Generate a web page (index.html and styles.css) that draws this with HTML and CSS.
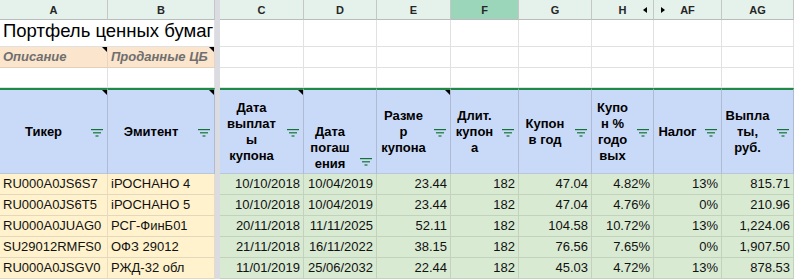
FILE: index.html
```html
<!DOCTYPE html>
<html lang="ru">
<head>
<meta charset="utf-8">
<title>Портфель ценных бумаг</title>
<link rel="stylesheet" href="styles.css">
</head>
<body>
<div class="sheet">
  <div class="freeze"></div>

  <!-- column letters -->
  <div class="ch">A</div>
  <div class="ch">B</div>
  <div class="ch">C</div>
  <div class="ch">D</div>
  <div class="ch">E</div>
  <div class="ch sel">F</div>
  <div class="ch">G</div>
  <div class="ch">H<span class="hid hid-l"></span></div>
  <div class="ch">AF<span class="hid hid-r"></span></div>
  <div class="ch">AG</div>

  <!-- row 1 -->
  <div class="c title">Портфель ценных бумаг</div>
  <div class="c blank"></div>
  <div class="c blank"></div>
  <div class="c blank"></div>
  <div class="c blank"></div>
  <div class="c blank"></div>
  <div class="c blank"></div>
  <div class="c blank"></div>
  <div class="c blank"></div>
  <div class="c blank"></div>

  <!-- row 2 -->
  <div class="c desc">Описание<span class="note"></span></div>
  <div class="c desc">Проданные ЦБ<span class="note"></span></div>
  <div class="c blank"></div>
  <div class="c blank"></div>
  <div class="c blank"></div>
  <div class="c blank"></div>
  <div class="c blank"></div>
  <div class="c blank"></div>
  <div class="c blank"></div>
  <div class="c blank"></div>

  <!-- row 3 -->
  <div class="c blank"></div>
  <div class="c blank"></div>
  <div class="c blank"></div>
  <div class="c blank"></div>
  <div class="c blank"></div>
  <div class="c blank"></div>
  <div class="c blank"></div>
  <div class="c blank"></div>
  <div class="c blank"></div>
  <div class="c blank"></div>

  <!-- header row -->
  <div class="c hd"><div class="hd-txt">Тикер</div><svg class="flt" viewBox="0 0 12 8"><rect x="0" y="0" width="12" height="1.2"/><rect x="2" y="3.2" width="8" height="1.2"/><rect x="4.5" y="6.4" width="3" height="1.2"/></svg><span class="note"></span></div>
  <div class="c hd"><div class="hd-txt">Эмитент</div><svg class="flt" viewBox="0 0 12 8"><rect x="0" y="0" width="12" height="1.2"/><rect x="2" y="3.2" width="8" height="1.2"/><rect x="4.5" y="6.4" width="3" height="1.2"/></svg><span class="note"></span></div>
  <div class="c hd"><div class="hd-txt">Дата<br>выплат<br>ы<br>купона</div><svg class="flt" viewBox="0 0 12 8"><rect x="0" y="0" width="12" height="1.2"/><rect x="2" y="3.2" width="8" height="1.2"/><rect x="4.5" y="6.4" width="3" height="1.2"/></svg><span class="note"></span></div>
  <div class="c hd bot"><div class="hd-txt">Дата<br>погаш<br>ения</div><svg class="flt" viewBox="0 0 12 8"><rect x="0" y="0" width="12" height="1.2"/><rect x="2" y="3.2" width="8" height="1.2"/><rect x="4.5" y="6.4" width="3" height="1.2"/></svg></div>
  <div class="c hd"><div class="hd-txt">Разме<br>р<br>купона</div><svg class="flt" viewBox="0 0 12 8"><rect x="0" y="0" width="12" height="1.2"/><rect x="2" y="3.2" width="8" height="1.2"/><rect x="4.5" y="6.4" width="3" height="1.2"/></svg><span class="note"></span></div>
  <div class="c hd"><div class="hd-txt">Длит.<br>купон<br>а</div><svg class="flt" viewBox="0 0 12 8"><rect x="0" y="0" width="12" height="1.2"/><rect x="2" y="3.2" width="8" height="1.2"/><rect x="4.5" y="6.4" width="3" height="1.2"/></svg></div>
  <div class="c hd"><div class="hd-txt">Купон<br>в год</div><svg class="flt" viewBox="0 0 12 8"><rect x="0" y="0" width="12" height="1.2"/><rect x="2" y="3.2" width="8" height="1.2"/><rect x="4.5" y="6.4" width="3" height="1.2"/></svg></div>
  <div class="c hd"><div class="hd-txt">Купо<br>н %<br>годо<br>вых</div><svg class="flt" viewBox="0 0 12 8"><rect x="0" y="0" width="12" height="1.2"/><rect x="2" y="3.2" width="8" height="1.2"/><rect x="4.5" y="6.4" width="3" height="1.2"/></svg></div>
  <div class="c hd"><div class="hd-txt">Налог</div><svg class="flt" viewBox="0 0 12 8"><rect x="0" y="0" width="12" height="1.2"/><rect x="2" y="3.2" width="8" height="1.2"/><rect x="4.5" y="6.4" width="3" height="1.2"/></svg></div>
  <div class="c hd"><div class="hd-txt">Выпла<br>ты,<br>руб.</div><svg class="flt" viewBox="0 0 12 8"><rect x="0" y="0" width="12" height="1.2"/><rect x="2" y="3.2" width="8" height="1.2"/><rect x="4.5" y="6.4" width="3" height="1.2"/></svg></div>

  <!-- data rows -->
  <div class="c dt y">RU000A0JS6S7</div>
  <div class="c dt y">iРОСНАНО 4</div>
  <div class="c dt g r">10/10/2018</div>
  <div class="c dt g r">10/04/2019</div>
  <div class="c dt g r">23.44</div>
  <div class="c dt g r">182</div>
  <div class="c dt g r">47.04</div>
  <div class="c dt g r">4.82%</div>
  <div class="c dt g r">13%</div>
  <div class="c dt g r">815.71</div>

  <div class="c dt y">RU000A0JS6T5</div>
  <div class="c dt y">iРОСНАНО 5</div>
  <div class="c dt g r">10/10/2018</div>
  <div class="c dt g r">10/04/2019</div>
  <div class="c dt g r">23.44</div>
  <div class="c dt g r">182</div>
  <div class="c dt g r">47.04</div>
  <div class="c dt g r">4.76%</div>
  <div class="c dt g r">0%</div>
  <div class="c dt g r">210.96</div>

  <div class="c dt y">RU000A0JUAG0</div>
  <div class="c dt y">РСГ-ФинБ01</div>
  <div class="c dt g r">20/11/2018</div>
  <div class="c dt g r">11/11/2025</div>
  <div class="c dt g r">52.11</div>
  <div class="c dt g r">182</div>
  <div class="c dt g r">104.58</div>
  <div class="c dt g r">10.72%</div>
  <div class="c dt g r">13%</div>
  <div class="c dt g r">1,224.06</div>

  <div class="c dt y">SU29012RMFS0</div>
  <div class="c dt y">ОФЗ 29012</div>
  <div class="c dt g r">21/11/2018</div>
  <div class="c dt g r">16/11/2022</div>
  <div class="c dt g r">38.15</div>
  <div class="c dt g r">182</div>
  <div class="c dt g r">76.56</div>
  <div class="c dt g r">7.65%</div>
  <div class="c dt g r">0%</div>
  <div class="c dt g r">1,907.50</div>

  <div class="c dt y">RU000A0JSGV0</div>
  <div class="c dt y">РЖД-32 обл</div>
  <div class="c dt g r">11/01/2019</div>
  <div class="c dt g r">25/06/2032</div>
  <div class="c dt g r">22.44</div>
  <div class="c dt g r">182</div>
  <div class="c dt g r">45.03</div>
  <div class="c dt g r">4.72%</div>
  <div class="c dt g r">13%</div>
  <div class="c dt g r">878.53</div>
</div>
</body>
</html>
```

FILE: styles.css
```css
* {
  box-sizing: border-box;
}

html, body {
  margin: 0;
  padding: 0;
  background: #ffffff;
}

body {
  font-family: "Liberation Sans", Arial, sans-serif;
  font-size: 13px;
  color: #000000;
  overflow: hidden;
}

.sheet {
  display: grid;
  grid-template-columns: 108px 107px 5px 84px 73px 74px 68px 73px 62px 68px 72px;
  grid-template-rows: 20px 27px 21px 20px 86px 21px 21px 21px 21px 21px;
  width: 794px;
  height: 279px;
  overflow: hidden;
}

.freeze {
  grid-column: 3;
  grid-row: 1 / -1;
  background: #dadce1;
  z-index: 2;
}

/* column letter headers */
.ch {
  position: relative;
  display: flex;
  align-items: center;
  justify-content: center;
  background: #e4f2eb;
  border-right: 1px solid #c4c7c5;
  border-bottom: 1px solid #b9bcba;
  font-size: 11px;
  color: #262626;
  font-weight: bold;
}

.ch.sel {
  background: #9bd6bb;
}

.hid {
  position: absolute;
  top: 7px;
  width: 0;
  height: 0;
  border-top: 3px solid transparent;
  border-bottom: 3px solid transparent;
}

.hid-l {
  right: 6px;
  border-right: 4px solid #000;
}

.hid-r {
  left: 7px;
  border-left: 4px solid #000;
}

/* generic cell */
.c {
  position: relative;
  border-right: 1px solid #e1e1e1;
  border-bottom: 1px solid #e1e1e1;
  white-space: nowrap;
}

.title {
  font-size: 18.5px;
  padding: 0 0 4px 3px;
  display: flex;
  align-items: flex-end;
  overflow: visible;
  z-index: 1;
  border-right: none;
}

.desc {
  background: #fce5cd;
  color: #6f6f6f;
  font-weight: bold;
  font-style: italic;
  padding: 0 3px;
  line-height: 20px;
  border-right-color: #e9d4bf;
  border-bottom-color: #e3cfba;
}

.note {
  position: absolute;
  top: 0;
  right: 0;
  width: 0;
  height: 0;
  border-top: 5px solid #000;
  border-left: 5px solid transparent;
}

/* header row */
.hd {
  display: flex;
  align-items: center;
  background: #c9daf8;
  font-weight: bold;
  line-height: 16px;
  border-top: 2px solid #1d8b47;
  border-right-color: #aebbd2;
  border-bottom-color: #b9c6dc;
}

.hd-txt {
  flex: 1;
  text-align: center;
  padding-top: 1px;
}

.flt {
  flex: none;
  width: 12px;
  height: 8px;
  margin: 2px 4px 0 4px;
  fill: #137333;
}

.hd.bot {
  align-items: flex-end;
  padding-bottom: 1px;
}

.hd.bot .flt {
  margin-bottom: 6px;
}

/* data cells */
.dt {
  line-height: 20px;
  padding: 0 3px;
  color: #111;
}

.y {
  background: #fff2cc;
  border-right-color: #e6dcc0;
  border-bottom-color: #e2d8bb;
}

.g {
  background: #d9ead3;
  border-right-color: #c2d2bc;
  border-bottom-color: #c2d2bc;
}

.r {
  text-align: right;
}
```
